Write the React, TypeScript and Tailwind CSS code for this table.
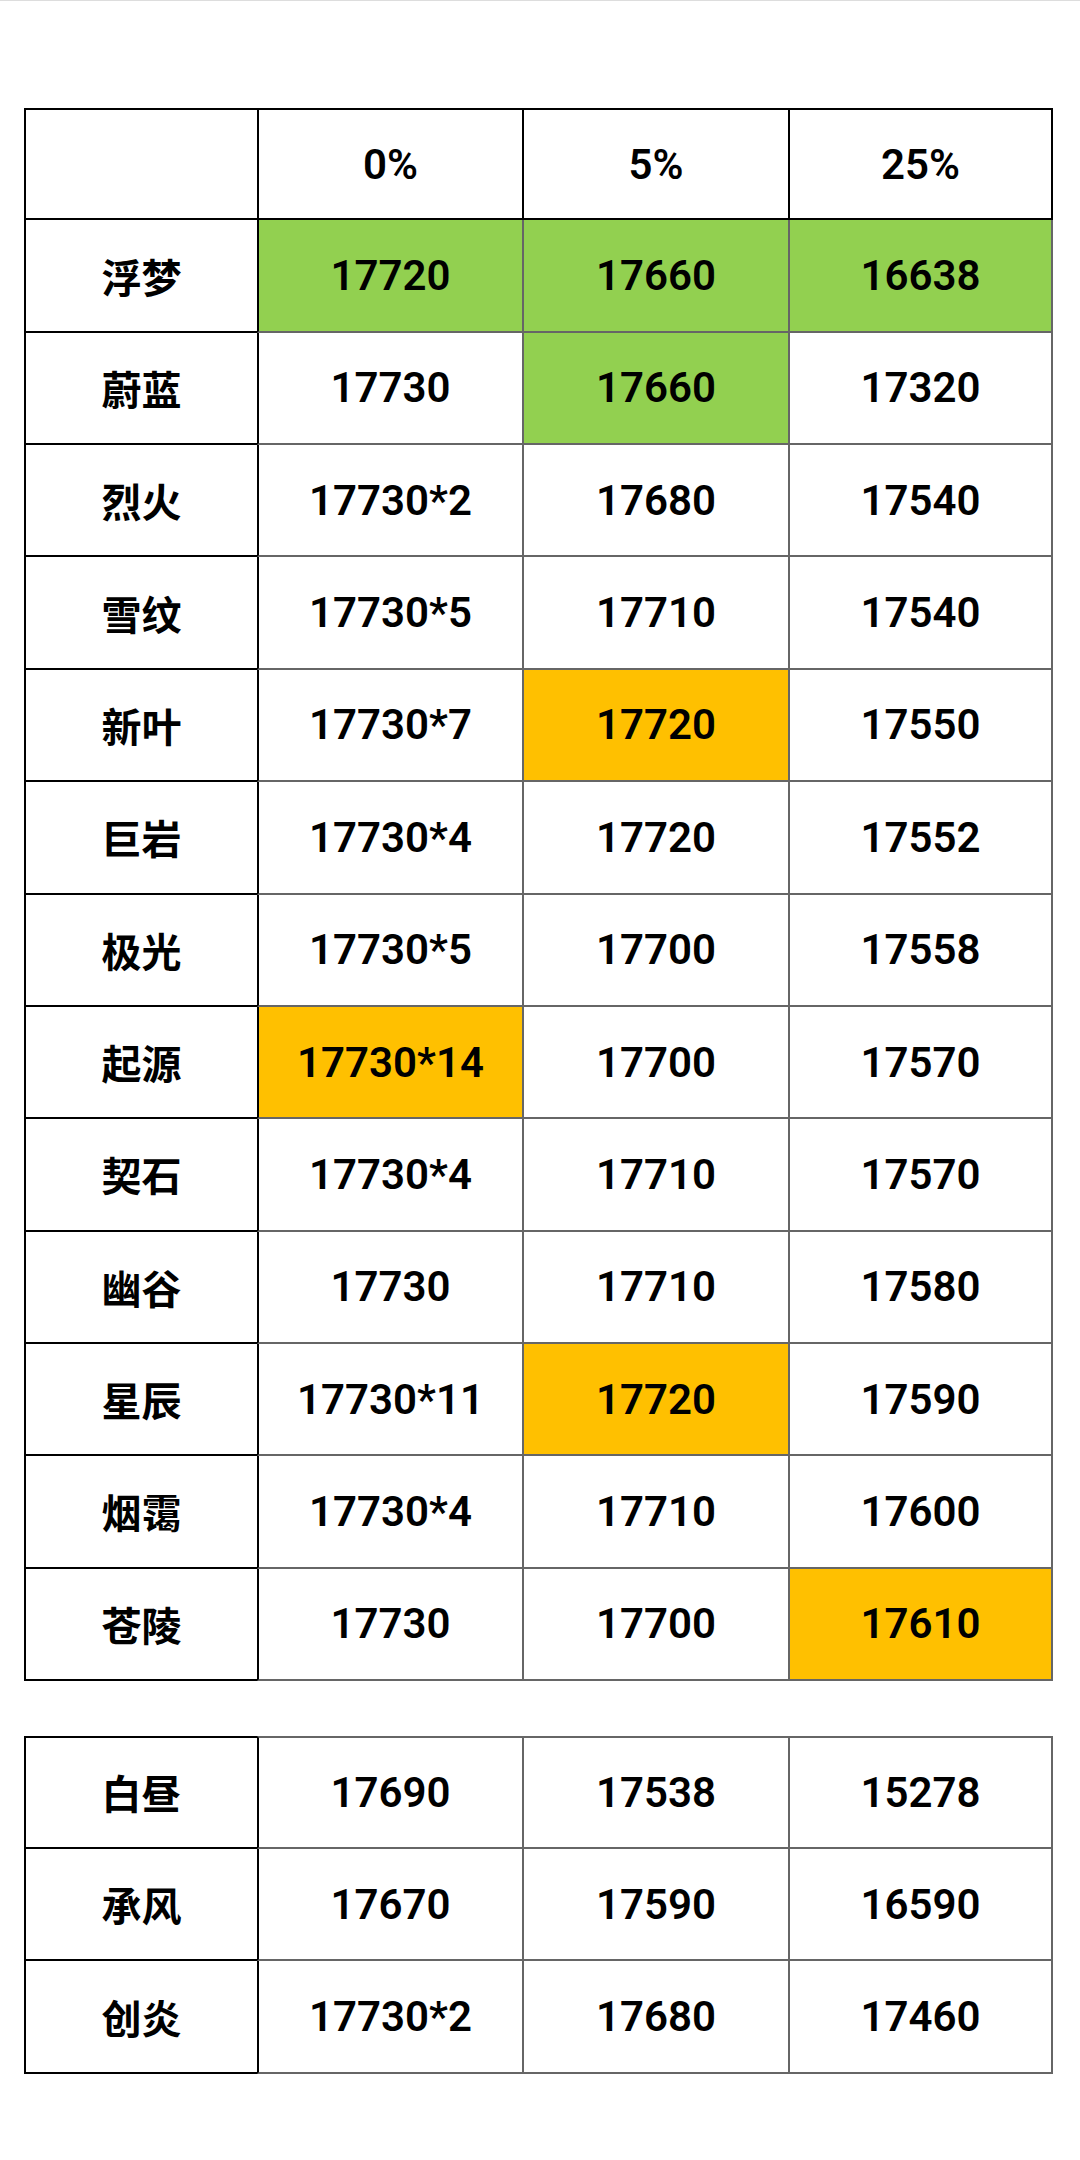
import React from "react";

type Cell = { v: string; bg?: "g" | "o" };
type Row = { name: string; cells: Cell[] };

const table1: Row[] = [
  { name: "浮梦", cells: [{ v: "17720", bg: "g" }, { v: "17660", bg: "g" }, { v: "16638", bg: "g" }] },
  { name: "蔚蓝", cells: [{ v: "17730" }, { v: "17660", bg: "g" }, { v: "17320" }] },
  { name: "烈火", cells: [{ v: "17730*2" }, { v: "17680" }, { v: "17540" }] },
  { name: "雪纹", cells: [{ v: "17730*5" }, { v: "17710" }, { v: "17540" }] },
  { name: "新叶", cells: [{ v: "17730*7" }, { v: "17720", bg: "o" }, { v: "17550" }] },
  { name: "巨岩", cells: [{ v: "17730*4" }, { v: "17720" }, { v: "17552" }] },
  { name: "极光", cells: [{ v: "17730*5" }, { v: "17700" }, { v: "17558" }] },
  { name: "起源", cells: [{ v: "17730*14", bg: "o" }, { v: "17700" }, { v: "17570" }] },
  { name: "契石", cells: [{ v: "17730*4" }, { v: "17710" }, { v: "17570" }] },
  { name: "幽谷", cells: [{ v: "17730" }, { v: "17710" }, { v: "17580" }] },
  { name: "星辰", cells: [{ v: "17730*11" }, { v: "17720", bg: "o" }, { v: "17590" }] },
  { name: "烟霭", cells: [{ v: "17730*4" }, { v: "17710" }, { v: "17600" }] },
  { name: "苍陵", cells: [{ v: "17730" }, { v: "17700" }, { v: "17610", bg: "o" }] },
];

const table2: Row[] = [
  { name: "白昼", cells: [{ v: "17690" }, { v: "17538" }, { v: "15278" }] },
  { name: "承风", cells: [{ v: "17670" }, { v: "17590" }, { v: "16590" }] },
  { name: "创炎", cells: [{ v: "17730*2" }, { v: "17680" }, { v: "17460" }] },
];

const numFont = { fontFamily: "Roboto, 'Noto Sans CJK SC', sans-serif" };
const cjkFont = { fontFamily: "'Noto Sans CJK SC', Roboto, sans-serif" };

function DataTable({ rows, header, rowH }: { rows: Row[]; header: boolean; rowH: string }) {
  return (
    <div className={`grid grid-cols-[233px_265px_266px_265px] ${rowH} ml-[24px] w-[1029px]`}>
      {header && (
        <>
          <div className="border-2 border-black border-r-0 border-b-2" />
          {["0%", "5%", "25%"].map((h, i) => (
            <div
              key={h}
              className={`flex items-center justify-center border-t-2 border-b-2 border-l-2 border-black text-[42px] font-semibold text-black ${i === 2 ? "border-r-2" : ""}`}
              style={numFont}
            >
              {h}
            </div>
          ))}
        </>
      )}
      {rows.map((r, ri) => (
        <React.Fragment key={r.name}>
          <div
            className={`flex items-center justify-center border-l-2 border-b-2 border-black text-[40px] font-bold text-black ${!header && ri === 0 ? "border-t-2" : ""}`}
            style={cjkFont}
          >
            {r.name}
          </div>
          {r.cells.map((c, ci) => (
            <div
              key={ci}
              className={`flex items-center justify-center border-b-2 border-[#666666] text-[42px] font-semibold text-black ${ci === 0 ? "border-l-2 border-l-black" : "border-l-2"} ${ci === 2 ? "border-r-2" : ""} ${!header && ri === 0 ? "border-t-2" : ""} ${c.bg === "g" ? "bg-[#92d050]" : c.bg === "o" ? "bg-[#ffc000]" : "bg-white"}`}
              style={numFont}
            >
              {c.v}
            </div>
          ))}
        </React.Fragment>
      ))}
    </div>
  );
}

export default function App() {
  return (
    <div className="w-[1080px] h-[2160px] bg-white overflow-hidden border-t border-[#dddddd]">
      <div className="pt-[107px]">
        <DataTable rows={table1} header rowH="auto-rows-[112.36px]" />
        <div className="h-[55px]" />
        <DataTable rows={table2} header={false} rowH="auto-rows-[112.67px]" />
      </div>
    </div>
  );
}
